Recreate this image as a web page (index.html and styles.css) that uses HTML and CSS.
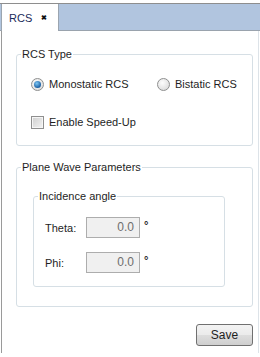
FILE: index.html
```html
<!DOCTYPE html>
<html lang="en">

<head>
  <meta charset="UTF-8">
  <meta name="viewport" content="width=device-width, initial-scale=1.0">
  <link rel="stylesheet" href="styles.css">
</head>

<body>
  <div class="tabbar">
    <div class="tab">
      <span class="tab-title">RCS</span>
      <span class="tab-close">&#x2716;</span>
    </div>
  </div>

  <div class="panel">
    <fieldset class="group group-rcs">
      <legend>RCS Type</legend>
      <div class="group-body">
        <div class="row">
          <label class="option option-mono"><span class="radio checked"></span>Monostatic RCS</label>
          <label class="option"><span class="radio"></span>Bistatic RCS</label>
        </div>
        <div class="row row-check">
          <label class="option"><span class="check"></span>Enable Speed-Up</label>
        </div>
      </div>
    </fieldset>

    <fieldset class="group group-wave">
      <legend>Plane Wave Parameters</legend>
      <div class="group-body">
        <fieldset class="group group-angle">
          <legend>Incidence angle</legend>
          <div class="group-body">
            <div class="field">
              <span class="field-label">Theta:</span>
              <span class="field-input">0.0</span>
              <span class="unit">&deg;</span>
            </div>
            <div class="field">
              <span class="field-label">Phi:</span>
              <span class="field-input">0.0</span>
              <span class="unit">&deg;</span>
            </div>
          </div>
        </fieldset>
      </div>
    </fieldset>

    <div class="actions">
      <button class="button">Save</button>
    </div>
  </div>
</body>

</html>
```

FILE: styles.css
```css
body {
  margin: 0;
  padding: 0;
  width: 260px;
  height: 357px;
  overflow: hidden;
  background: #fff;
  font-family: "Liberation Sans", Arial, sans-serif;
  font-size: 11px;
  color: #1e1e1e;
}

/* Tab strip */
.tabbar {
  margin-top: 3px;
  height: 26px;
  background: #b1c5df;
  border-top: 1px solid #8e8e8e;
  border-bottom: 1px solid #9aa3ad;
  display: flex;
}

.tab {
  width: 58px;
  height: 27px;
  margin-left: 1px;
  background: #fff;
  border-right: 1px solid #9ba5b0;
  border-left: 1px solid #9ba5b0;
  display: flex;
  align-items: center;
  padding-left: 7px;
  box-sizing: border-box;
}

.tab-title {
  color: #1a2c5a;
  font-size: 11px;
}

.tab-close {
  margin-left: 9px;
  font-size: 7px;
  font-weight: bold;
  color: #111;
}

/* Panel */
.panel {
  height: 322px;
  border-left: 1px solid #9a9a9a;
  border-right: 1px solid #dde3e8;
  margin-left: 1px;
  margin-right: 1px;
  padding-top: 17px;
  box-sizing: border-box;
}

.group {
  border: 1px solid #d6dfe5;
  border-radius: 3px;
  margin: 0;
  padding: 0;
}

.group legend {
  padding: 0 1px;
  margin-left: 4px;
  line-height: 13px;
}

.group-rcs {
  margin-left: 14px;
  width: 237px;
  box-sizing: border-box;
}

.group-rcs .group-body {
  padding: 13px 0 13px 14px;
}

.row {
  display: flex;
  height: 20px;
  align-items: center;
}

.row-check {
  margin-top: 18px;
}

.option {
  display: flex;
  align-items: center;
}

.option-mono {
  width: 126px;
}

.radio {
  width: 11px;
  height: 11px;
  border-radius: 50%;
  border: 1px solid #8e8f8f;
  background: radial-gradient(circle at 40% 35%, #fdfdfd, #d4d4d4);
  margin-right: 5px;
  position: relative;
}

.radio.checked::after {
  content: "";
  position: absolute;
  left: 2px;
  top: 2px;
  width: 7px;
  height: 7px;
  border-radius: 50%;
  background: radial-gradient(circle at 40% 35%, #7cc6f3, #1b5fa3 70%, #0f3f78);
}

.check {
  width: 11px;
  height: 11px;
  border: 1px solid #8f8f8f;
  background: linear-gradient(135deg, #cfcfcf, #f4f4f4);
  box-shadow: inset 0 0 0 1px #f6f6f6;
  margin-right: 5px;
}

.group-wave {
  margin-top: 15px;
  margin-left: 14px;
  width: 237px;
  box-sizing: border-box;
}

.group-wave > .group-body {
  padding: 16px 0 19px 16px;
}

.group-angle {
  width: 192px;
  box-sizing: border-box;
}

.group-angle .group-body {
  padding: 14px 0 13px 11px;
}

.field {
  display: flex;
  align-items: center;
  height: 21px;
  margin-bottom: 14px;
}

.field:last-child {
  margin-bottom: 0;
}

.field-label {
  width: 41px;
}

.field-input {
  width: 54px;
  height: 21px;
  box-sizing: border-box;
  border: 1px solid #adadad;
  background: #f0f0f0;
  color: #6d6d6d;
  text-align: right;
  padding-right: 5px;
  line-height: 19px;
  font-size: 12px;
}

.unit {
  margin-left: 4px;
  font-weight: bold;
  font-size: 11px;
  margin-top: -6px;
}

/* Save button */
.actions {
  display: flex;
  justify-content: flex-end;
  margin-top: 17px;
  padding-right: 5px;
}

.button {
  width: 57px;
  height: 22px;
  border: 1px solid #707070;
  border-radius: 3px;
  background: linear-gradient(#f3f3f3 0%, #ebebeb 50%, #dddddd 51%, #cfcfcf 100%);
  font-family: "Liberation Sans", Arial, sans-serif;
  font-size: 12px;
  color: #1e1e1e;
  padding: 0;
}
```
